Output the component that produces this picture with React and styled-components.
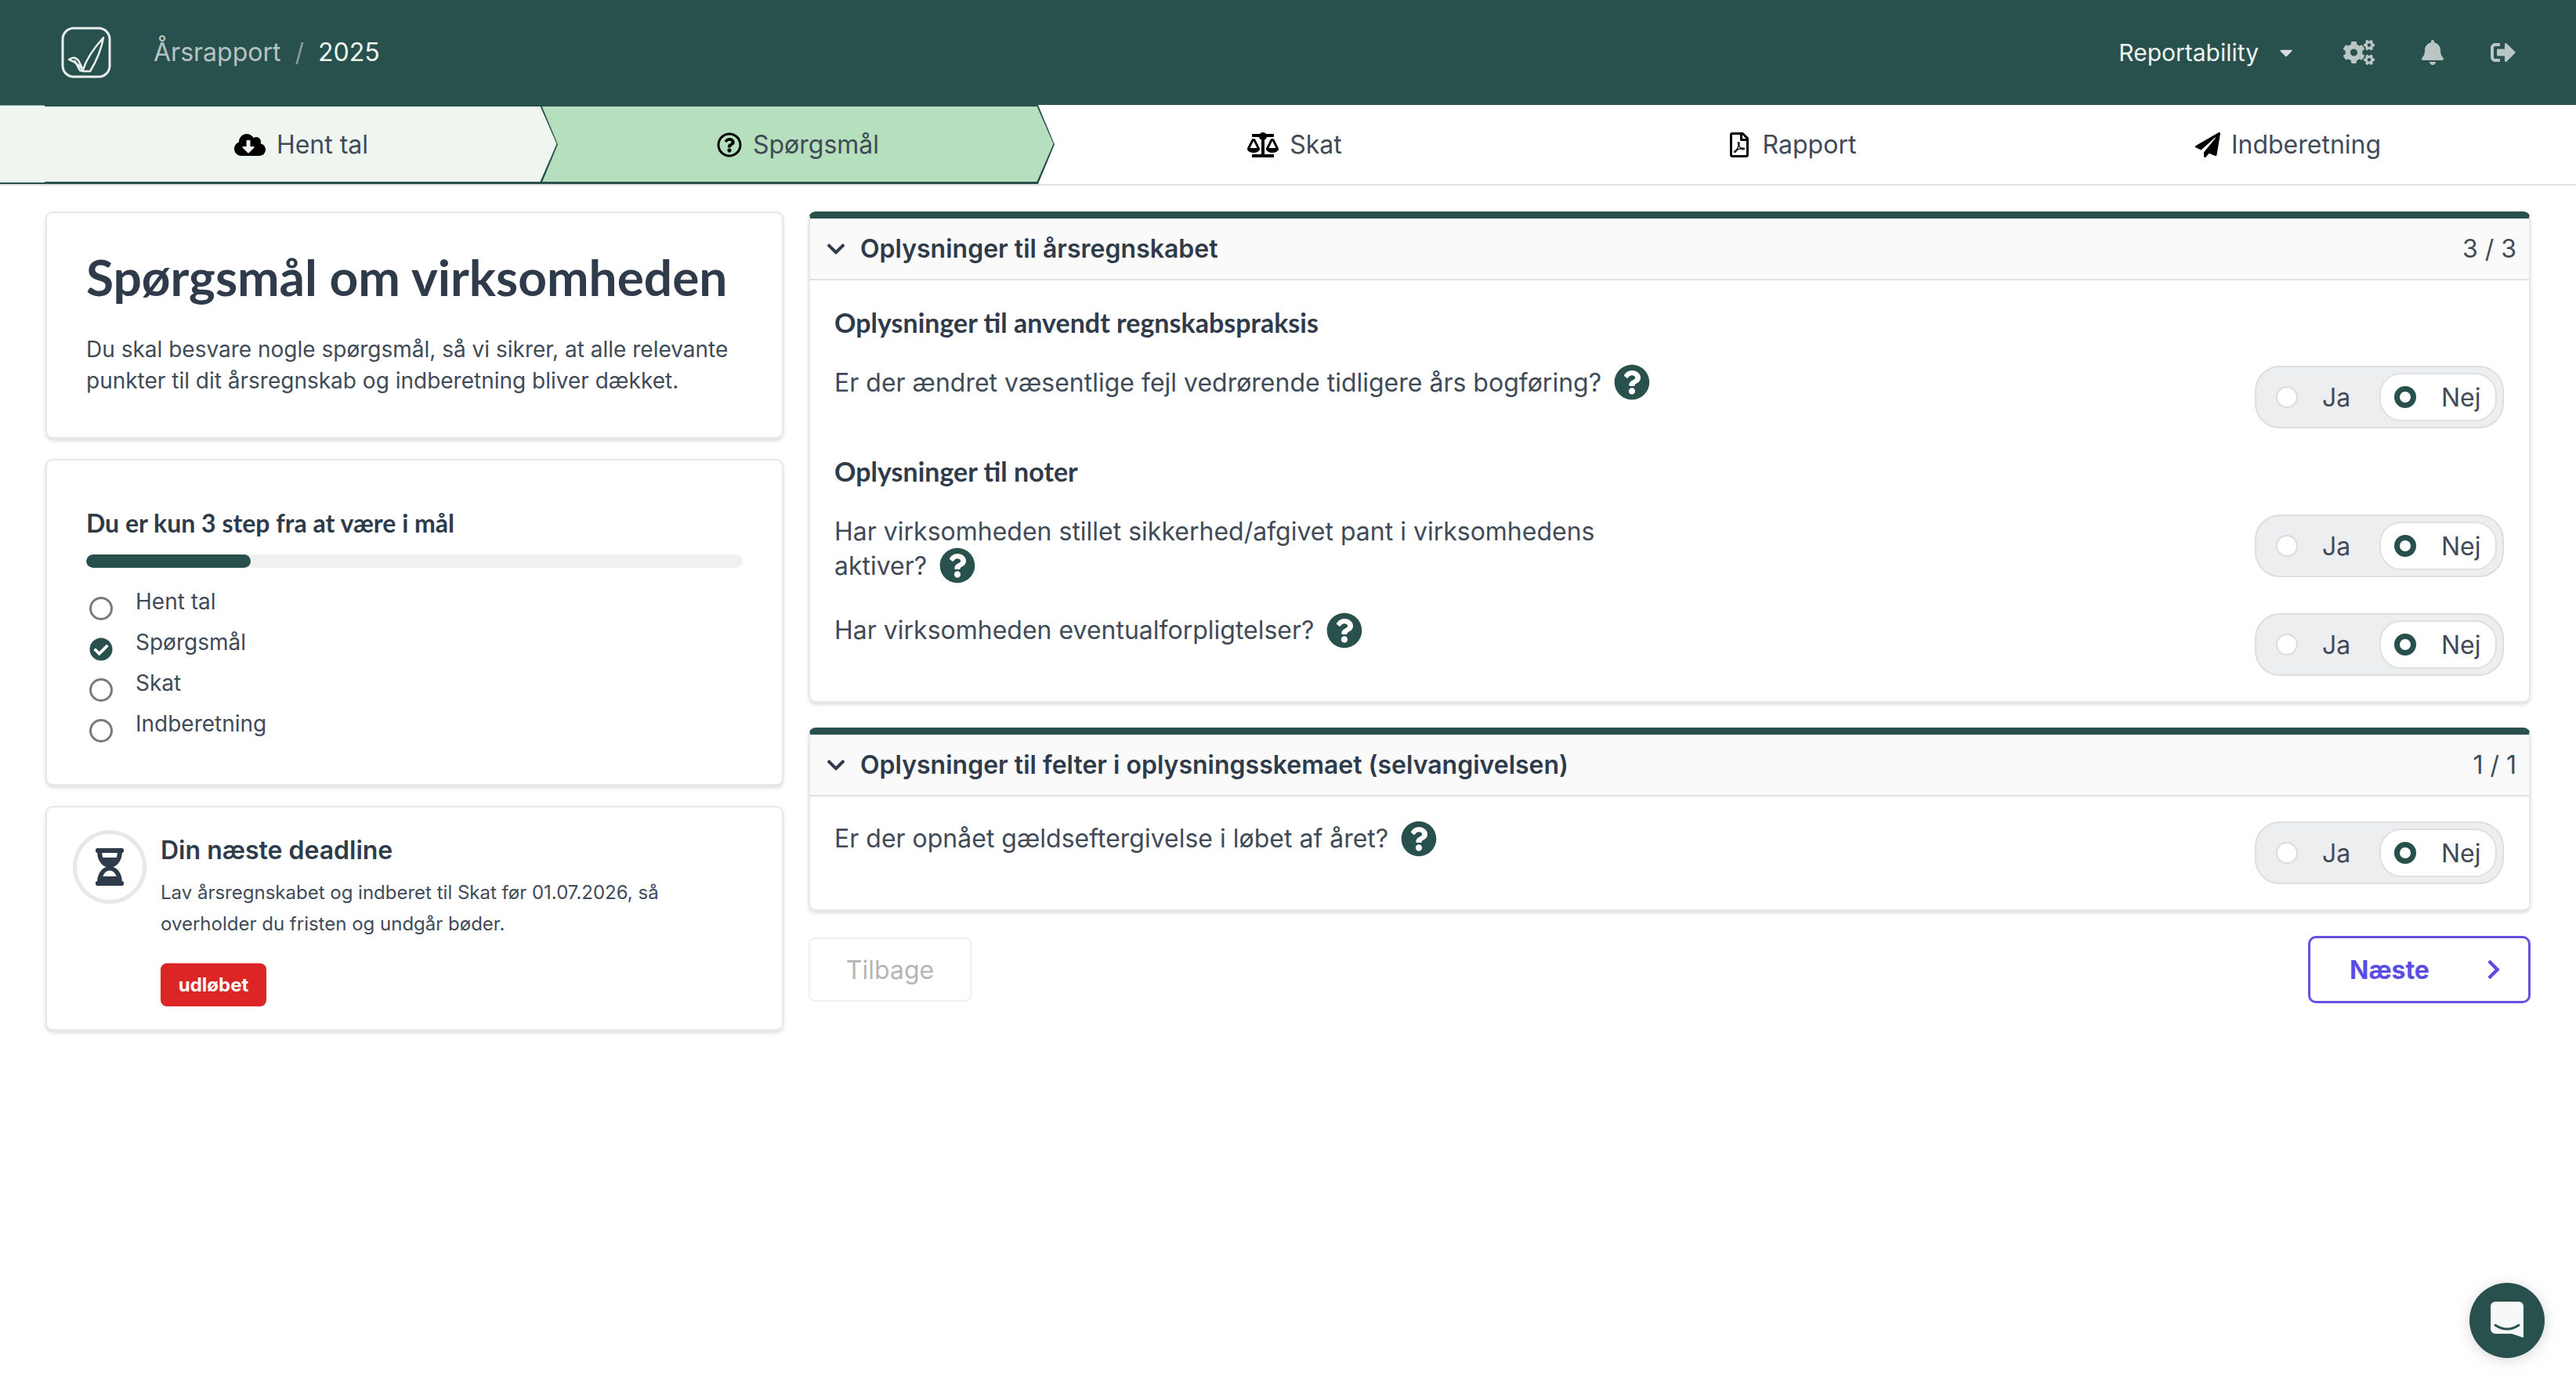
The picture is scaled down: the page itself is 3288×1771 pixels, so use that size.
import React from "react";
import styled, { createGlobalStyle } from "styled-components";
import {
  FaCloudDownloadAlt, FaRegQuestionCircle, FaBalanceScale, FaRegFilePdf, FaPaperPlane,
  FaCogs, FaBell, FaSignOutAlt, FaCheckCircle, FaHourglassHalf, FaQuestionCircle,
  FaChevronDown, FaChevronRight, FaCaretDown,
} from "react-icons/fa";

const DARK = "#28504c";

const Global = createGlobalStyle`
  html, body { margin: 0; padding: 0; background: #fff; }
  body { font-family: Inter, "Liberation Sans", sans-serif; color: #374151; overflow: hidden; }
  * { box-sizing: border-box; }
`;

const Page = styled.div`
  min-height: 100vh;
  display: flex;
  flex-direction: column;
`;

const Nav = styled.header`
  height: 134px;
  background: ${DARK};
  display: flex;
  align-items: center;
  justify-content: space-between;
  padding: 0 77px 0 78px;
`;
const NavLeft = styled.div`
  display: flex;
  align-items: center;
`;
const Crumbs = styled.div`
  display: flex;
  align-items: center;
  margin-left: 54px;
  font-size: 32px;
  line-height: 44px;
`;
const CrumbMuted = styled.span`
  color: rgba(255, 255, 255, 0.68);
`;
const CrumbSep = styled.span`
  color: rgba(255, 255, 255, 0.45);
  margin: 0 18px;
`;
const CrumbCurrent = styled.span`
  color: #f1f6ef;
`;
const NavRight = styled.div`
  display: flex;
  align-items: center;
  color: #b9c6c3;
`;
const Company = styled.span`
  font-size: 30px;
  color: #eef4f1;
`;
const Caret = styled.span`
  display: inline-flex;
  margin: 0 60px 0 22px;
  font-size: 26px;
  color: #d5dedb;
`;
const NavIcon = styled.span`
  display: inline-flex;
  font-size: ${(p) => p.$size || 32}px;
  margin-left: ${(p) => p.$gap || 0}px;
`;

const StepBar = styled.nav`
  display: flex;
  background: #fff;
  border-bottom: 2px solid #e2e2e2;
  height: 103px;
`;
const StepLead = styled.div`
  flex: 0 0 57px;
  background: #eef6ef;
  border-top: 1px solid #6f9a90;
  border-bottom: 2px solid ${DARK};
`;
const Step = styled.div`
  flex: 0 0 655px;
  margin-right: -21px;
  height: 101px;
  position: relative;
  z-index: ${(p) => p.$z};
  display: flex;
  align-items: center;
  justify-content: center;
  gap: 14px;
  font-size: 32px;
  color: #414a57;
  background: ${(p) => (p.$state === "todo" ? "#fff" : DARK)};
  clip-path: polygon(0 0, calc(100% - 21px) 0, 100% 50%, calc(100% - 21px) 100%, 0 100%);
  &::before {
    content: "";
    position: absolute;
    inset: 1.5px 1.5px 3px 0;
    z-index: -1;
    background: ${(p) => (p.$state === "done" ? "#eef6ef" : p.$state === "active" ? "#b6dfbd" : "#fff")};
    clip-path: polygon(0 0, calc(100% - 21px) 0, 100% 50%, calc(100% - 21px) 100%, 0 100%);
  }
`;
const StepIcon = styled.span`
  display: inline-flex;
  color: #000;
  font-size: ${(p) => p.$size || 32}px;
`;

const Main = styled.main`
  display: grid;
  grid-template-columns: 942px 2198px;
  gap: 32px;
  padding: 33px 58px 0;
  align-items: start;
`;
const Column = styled.div`
  display: flex;
  flex-direction: column;
  gap: 26px;
`;
const Card = styled.section`
  background: #fff;
  border: 2px solid #e8e8e8;
  border-radius: 9px;
  box-shadow: 0 3px 5px rgba(0, 0, 0, 0.13);
`;
const IntroCard = styled(Card)`
  height: 290px;
  padding: 44px 50px 0;
`;
const Title = styled.h1`
  margin: 0 0 34px;
  font-family: Lato, sans-serif;
  font-weight: 700;
  font-size: 64px;
  line-height: 76px;
  color: #2f3b4a;
`;
const Lead = styled.p`
  margin: 0;
  font-size: 28px;
  line-height: 40px;
  color: #414a57;
`;
const ProgressCard = styled(Card)`
  height: 417px;
  padding: 58px 50px 0;
`;
const ProgressTitle = styled.h2`
  margin: 0 0 18px;
  font-family: Lato, sans-serif;
  font-weight: 700;
  font-size: 32px;
  line-height: 44px;
  color: #2f3b4a;
`;
const Track = styled.div`
  height: 17px;
  background: #f0f0f0;
  border-radius: 9px;
  overflow: hidden;
`;
const Fill = styled.div`
  height: 100%;
  background: ${DARK};
  border-radius: 9px;
`;
const Checklist = styled.ul`
  list-style: none;
  margin: 23px 0 0;
  padding: 0;
`;
const CheckItem = styled.li`
  display: flex;
  align-items: flex-start;
  height: 52px;
  font-size: 28px;
  line-height: 40px;
  color: #414a57;
`;
const Dot = styled.span`
  flex: 0 0 30px;
  width: 30px;
  height: 30px;
  margin: 14px 29px 0 4px;
  border-radius: 50%;
  border: 3px solid #7a7a7a;
`;
const DotDone = styled.span`
  flex: 0 0 30px;
  height: 30px;
  margin: 14px 29px 0 4px;
  display: inline-flex;
  font-size: 30px;
  color: ${DARK};
`;
const DeadlineCard = styled(Card)`
  height: 287px;
  padding: 29px 40px 0 33px;
  display: flex;
  align-items: flex-start;
`;
const Hourglass = styled.div`
  flex: 0 0 94px;
  height: 94px;
  border-radius: 50%;
  border: 5px solid #e8e8e8;
  display: flex;
  align-items: center;
  justify-content: center;
  font-size: 48px;
  color: #2f3b4a;
`;
const DeadlineBody = styled.div`
  margin-left: 18px;
`;
const DeadlineTitle = styled.h3`
  margin: 4px 0 12px;
  font-size: 32px;
  line-height: 44px;
  font-weight: 600;
  color: #2f3b4a;
`;
const DeadlineText = styled.p`
  margin: 0 0 30px;
  font-size: 24px;
  line-height: 40px;
  color: #414a57;
`;
const Badge = styled.span`
  display: inline-flex;
  align-items: center;
  justify-content: center;
  width: 135px;
  height: 55px;
  border-radius: 8px;
  background: #dc2626;
  color: #fff;
  font-size: 24px;
  font-weight: 700;
`;

const Accordion = styled(Card)`
  border-top: 9px solid ${DARK};
  border-radius: 9px;
  overflow: hidden;
`;
const AccordionHead = styled.div`
  height: 79px;
  background: #fafafa;
  border-bottom: 2px solid #e0e0e0;
  display: flex;
  align-items: center;
  padding: 0 16px 0 20px;
  font-size: 32px;
`;
const Chevron = styled.span`
  display: inline-flex;
  font-size: 26px;
  color: #2f3b4a;
  margin-right: 18px;
`;
const HeadTitle = styled.span`
  flex: 1;
  font-weight: 600;
  color: #2f3b4a;
`;
const HeadCount = styled.span`
  color: #414a57;
`;
const AccordionBody = styled.div`
  padding: 32px 32px 32px 31px;
`;
const SectionTitle = styled.h4`
  margin: 0 0 33px;
  font-family: Lato, sans-serif;
  font-weight: 700;
  font-size: 34px;
  line-height: 44px;
  color: #2f3b4a;
  div + & {
    margin-top: 33px;
  }
`;
const Row = styled.div`
  display: flex;
  justify-content: space-between;
  align-items: flex-start;
  & + & {
    margin-top: 38px;
  }
`;
const Question = styled.div`
  width: 1050px;
  font-size: 32px;
  line-height: 44px;
  color: #414a57;
`;
const HelpIcon = styled.span`
  display: inline-flex;
  vertical-align: middle;
  margin: -6px 0 0 16px;
  font-size: 46px;
  color: ${DARK};
  background: radial-gradient(circle, #fff 55%, transparent 56%);
  border-radius: 50%;
`;
const Toggle = styled.div`
  flex: 0 0 318px;
  height: 80px;
  display: flex;
  align-items: center;
  justify-content: space-between;
  padding: 0 7px 0 25px;
  background: #eceef0;
  border: 2px solid #dedede;
  border-radius: 32px;
`;
const Option = styled.div`
  display: flex;
  align-items: center;
  font-size: 32px;
  color: #414a57;
`;
const OptionOn = styled(Option)`
  width: 150px;
  height: 62px;
  padding-left: 17px;
  background: #fff;
  border: 2px solid #e0e0e0;
  border-radius: 28px;
`;
const Radio = styled.span`
  width: 28px;
  height: 28px;
  border-radius: 50%;
  margin-right: ${(p) => p.$gap}px;
  background: #fff;
  border: ${(p) => (p.$on ? `7px solid ${DARK}` : "2px solid #dcdcdc")};
`;
const Actions = styled.div`
  display: flex;
  justify-content: space-between;
  align-items: center;
`;
const BackButton = styled.button`
  width: 208px;
  height: 82px;
  background: #fff;
  border: 2px solid #f0f0f0;
  border-radius: 8px;
  font: inherit;
  font-size: 32px;
  color: #b5b5b5;
`;
const NextButton = styled.button`
  width: 284px;
  height: 86px;
  background: #fff;
  border: 3px solid #6351e0;
  border-radius: 10px;
  display: flex;
  align-items: center;
  justify-content: space-between;
  padding: 0 30px 0 50px;
  font: inherit;
  font-size: 32px;
  font-weight: 700;
  color: #5b4de3;
`;
const NextIcon = styled.span`
  display: inline-flex;
  font-size: 28px;
`;
const ChatButton = styled.div`
  position: fixed;
  right: 40px;
  bottom: 37px;
  width: 96px;
  height: 96px;
  border-radius: 50%;
  background: ${DARK};
  box-shadow: 0 2px 16px rgba(0, 0, 0, 0.12), 0 4px 30px rgba(0, 0, 0, 0.06);
  display: flex;
  align-items: center;
  justify-content: center;
`;

const Logo = () => (
  <svg width="64" height="66" viewBox="0 0 64 66" fill="none">
    <rect x="2" y="2" width="60" height="62" rx="14" stroke="#e9efec" strokeWidth="3" />
    <path
      d="M10 42 Q17 37 22 43 L28 55 Q34 36 54 14 Q50 36 37 57 L29 57 Q21 46 10 42 Z M17 43 L24 56 L29 57"
      stroke="#e9efec"
      strokeWidth="2.5"
      strokeLinejoin="round"
    />
  </svg>
);

const ChatIcon = () => (
  <svg width="42" height="48" viewBox="0 0 42 48">
    <path
      fill="#f7f8f8"
      d="M6 0h30a6 6 0 0 1 6 6v40l-15-5H6a6 6 0 0 1-6-6V6a6 6 0 0 1 6-6z"
    />
    <path d="M6 30 Q21 40 36 30" fill="none" stroke={DARK} strokeWidth="3" strokeLinecap="round" />
  </svg>
);

const YesNo = () => (
  <Toggle>
    <Option>
      <Radio $gap={31} />
      Ja
    </Option>
    <OptionOn>
      <Radio $on $gap={32} />
      Nej
    </OptionOn>
  </Toggle>
);

const Q = ({ children }) => (
  <Row>
    <Question>
      {children}
      <HelpIcon><FaQuestionCircle /></HelpIcon>
    </Question>
    <YesNo />
  </Row>
);

const steps = [
  { label: "Hent tal", icon: <FaCloudDownloadAlt />, size: 40, state: "done" },
  { label: "Spørgsmål", icon: <FaRegQuestionCircle />, state: "active" },
  { label: "Skat", icon: <FaBalanceScale />, size: 40, state: "todo" },
  { label: "Rapport", icon: <FaRegFilePdf />, state: "todo" },
  { label: "Indberetning", icon: <FaPaperPlane />, state: "todo" },
];

const checklist = [
  { label: "Hent tal" },
  { label: "Spørgsmål", done: true },
  { label: "Skat" },
  { label: "Indberetning" },
];

export default function App() {
  return (
    <Page>
      <Global />
      <Nav>
        <NavLeft>
          <Logo />
          <Crumbs>
            <CrumbMuted>Årsrapport</CrumbMuted>
            <CrumbSep>/</CrumbSep>
            <CrumbCurrent>2025</CrumbCurrent>
          </Crumbs>
        </NavLeft>
        <NavRight>
          <Company>Reportability</Company>
          <Caret><FaCaretDown /></Caret>
          <NavIcon $size={40}><FaCogs /></NavIcon>
          <NavIcon $gap={58} $size={32}><FaBell /></NavIcon>
          <NavIcon $gap={58} $size={32}><FaSignOutAlt /></NavIcon>
        </NavRight>
      </Nav>

      <StepBar>
        <StepLead />
        {steps.map((s, i) => (
          <Step key={s.label} $state={s.state} $z={10 - i}>
            <StepIcon $size={s.size}>{s.icon}</StepIcon>
            {s.label}
          </Step>
        ))}
      </StepBar>

      <Main>
        <Column>
          <IntroCard>
            <Title>Spørgsmål om virksomheden</Title>
            <Lead>
              Du skal besvare nogle spørgsmål, så vi sikrer, at alle relevante punkter til dit
              årsregnskab og indberetning bliver dækket.
            </Lead>
          </IntroCard>
          <ProgressCard>
            <ProgressTitle>Du er kun 3 step fra at være i mål</ProgressTitle>
            <Track><Fill style={{ width: "25%" }} /></Track>
            <Checklist>
              {checklist.map((c) => (
                <CheckItem key={c.label}>
                  {c.done ? <DotDone><FaCheckCircle /></DotDone> : <Dot />}
                  {c.label}
                </CheckItem>
              ))}
            </Checklist>
          </ProgressCard>
          <DeadlineCard>
            <Hourglass><FaHourglassHalf /></Hourglass>
            <DeadlineBody>
              <DeadlineTitle>Din næste deadline</DeadlineTitle>
              <DeadlineText>
                Lav årsregnskabet og indberet til Skat før 01.07.2026, så overholder du fristen og
                undgår bøder.
              </DeadlineText>
              <Badge>udløbet</Badge>
            </DeadlineBody>
          </DeadlineCard>
        </Column>

        <Column style={{ gap: 32 }}>
          <Accordion>
            <AccordionHead>
              <Chevron><FaChevronDown /></Chevron>
              <HeadTitle>Oplysninger til årsregnskabet</HeadTitle>
              <HeadCount>3 / 3</HeadCount>
            </AccordionHead>
            <AccordionBody>
              <SectionTitle>Oplysninger til anvendt regnskabspraksis</SectionTitle>
              <Q>Er der ændret væsentlige fejl vedrørende tidligere års bogføring?</Q>
              <SectionTitle>Oplysninger til noter</SectionTitle>
              <Q>Har virksomheden stillet sikkerhed/afgivet pant i virksomhedens aktiver?</Q>
              <Q>Har virksomheden eventualforpligtelser?</Q>
            </AccordionBody>
          </Accordion>
          <Accordion>
            <AccordionHead>
              <Chevron><FaChevronDown /></Chevron>
              <HeadTitle>Oplysninger til felter i oplysningsskemaet (selvangivelsen)</HeadTitle>
              <HeadCount>1 / 1</HeadCount>
            </AccordionHead>
            <AccordionBody>
              <Q>Er der opnået gældseftergivelse i løbet af året?</Q>
            </AccordionBody>
          </Accordion>
          <Actions>
            <BackButton>Tilbage</BackButton>
            <NextButton>
              Næste
              <NextIcon><FaChevronRight /></NextIcon>
            </NextButton>
          </Actions>
        </Column>
      </Main>

      <ChatButton><ChatIcon /></ChatButton>
    </Page>
  );
}
